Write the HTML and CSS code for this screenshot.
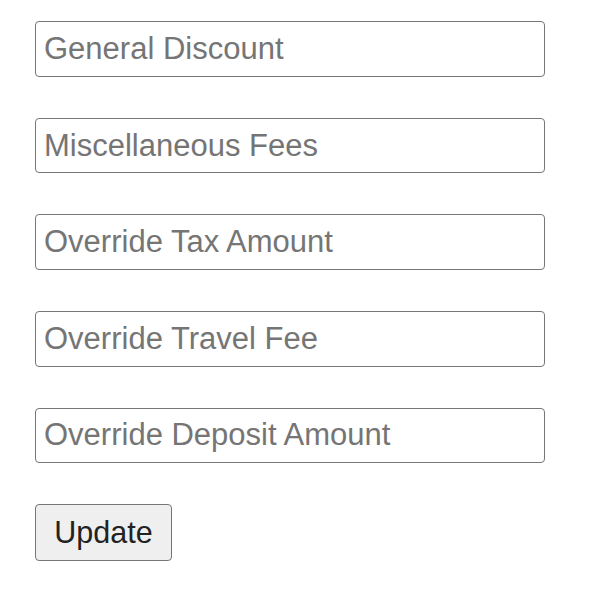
FILE: index.html
```html
<!DOCTYPE html>
<html lang="en">
<head>
<meta charset="utf-8">
<title>Overrides</title>
<link rel="stylesheet" href="styles.css">
</head>
<body>
<form class="form">
  <input class="field" type="text" placeholder="General Discount">
  <input class="field" type="text" placeholder="Miscellaneous Fees">
  <input class="field" type="text" placeholder="Override Tax Amount">
  <input class="field" type="text" placeholder="Override Travel Fee">
  <input class="field" type="text" placeholder="Override Deposit Amount">
  <button class="btn" type="button">Update</button>
</form>
</body>
</html>
```
FILE: styles.css
```css
html, body {
  margin: 0;
  padding: 0;
  background: #ffffff;
}

.form {
  display: flex;
  flex-direction: column;
  align-items: flex-start;
  gap: 41px;
  padding: 21.3px 0 0 35px;
  margin: 0;
}

.field {
  box-sizing: border-box;
  width: 509.5px;
  height: 55.6px;
  margin: 0;
  padding: 0 8px;
  border: 1.5px solid #767676;
  border-radius: 4px;
  background: #ffffff;
  font-family: "Liberation Sans", Arial, sans-serif;
  font-size: 31px;
  color: #111111;
  outline: none;
}

.field::placeholder {
  color: #757575;
  opacity: 1;
}

.btn {
  box-sizing: border-box;
  width: 137px;
  height: 57px;
  margin: 0;
  padding: 0 10px;
  border: 1.5px solid #767676;
  border-radius: 4px;
  background: #efefef;
  font-family: "Liberation Sans", Arial, sans-serif;
  font-size: 30.5px;
  color: #222222;
  text-align: center;
}
```
